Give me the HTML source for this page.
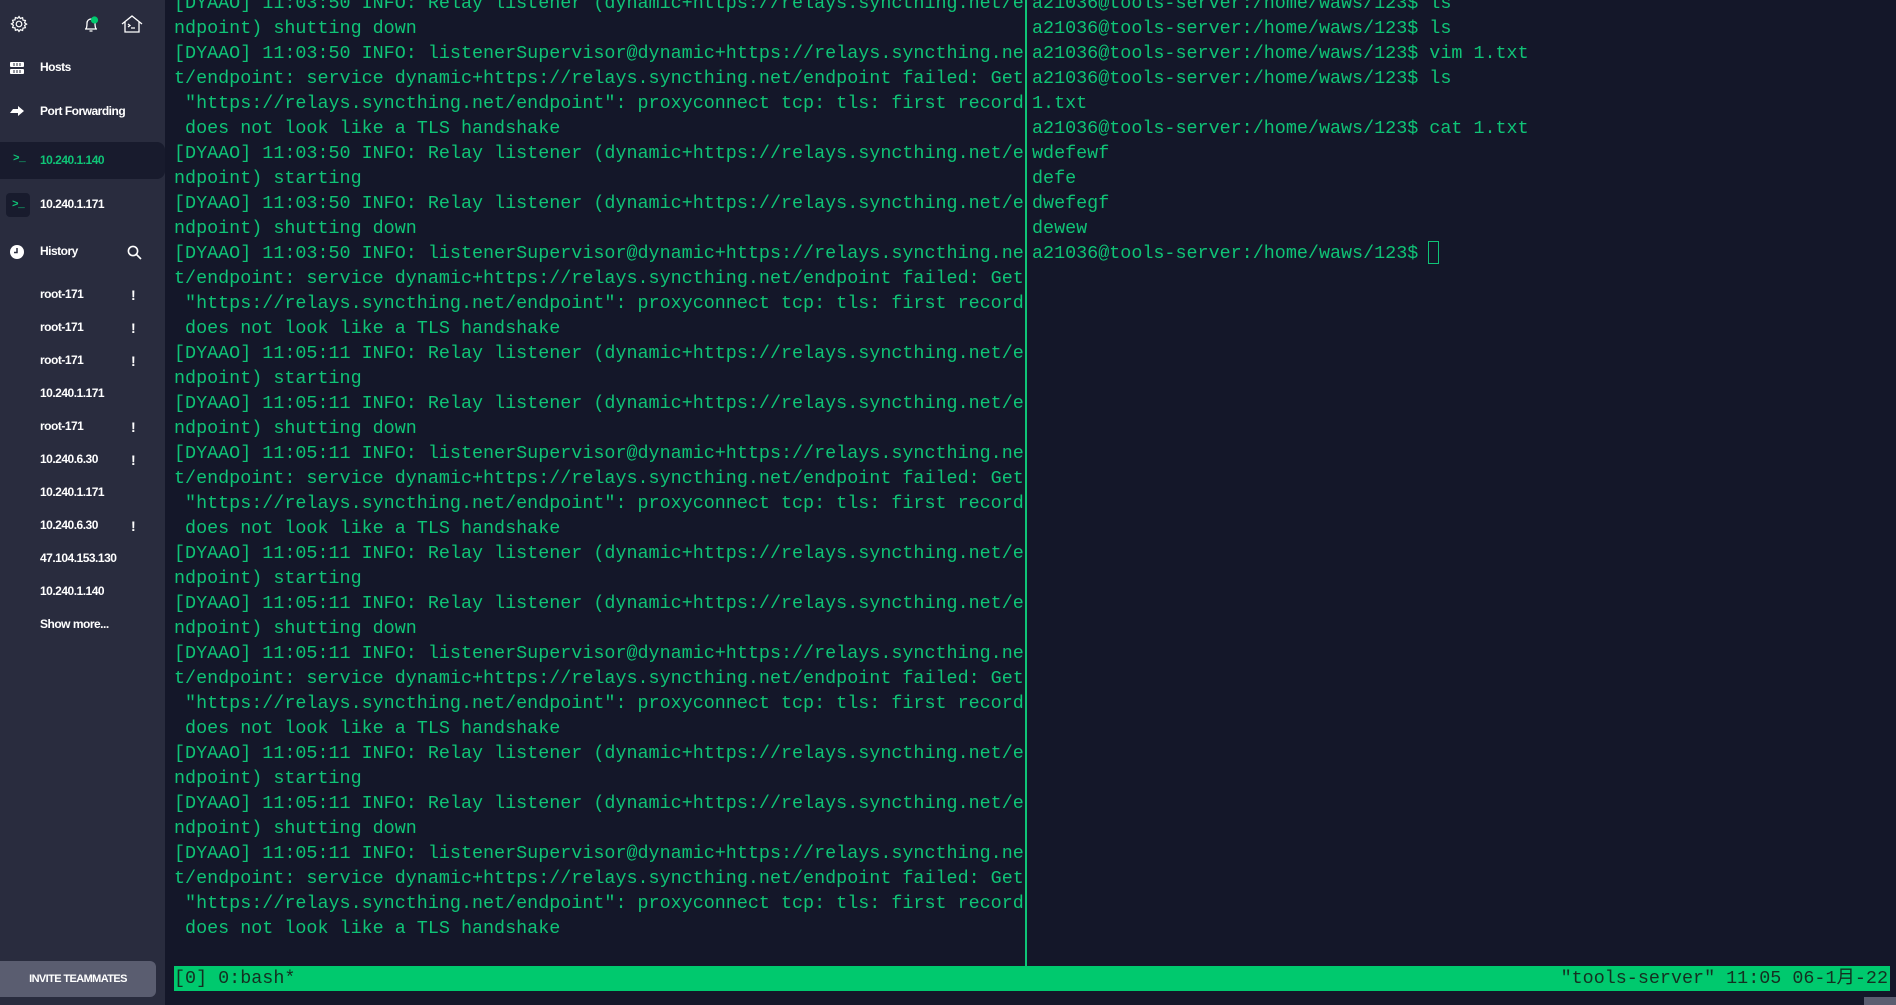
<!DOCTYPE html>
<html><head><meta charset="utf-8"><style>
*{margin:0;padding:0;box-sizing:border-box}
html,body{width:1896px;height:1005px;overflow:hidden;background:#141729}
#side{position:absolute;left:0;top:0;width:165px;height:1005px;background:#292c3e;font-family:"Liberation Sans",sans-serif;color:#fff;font-weight:bold;letter-spacing:-0.5px}
.it{position:absolute;left:40px;font-size:12px}
.ex{position:absolute;left:131px;font-size:14px;font-weight:bold}
.ic{position:absolute}
#act{position:absolute;left:0;top:142px;width:165px;height:37px;background:#181b2d;border-radius:0 8px 8px 0}
#inv{position:absolute;left:0;top:961px;width:156px;height:36px;background:#5a5d70;border-radius:0 6px 6px 0;font-size:11px;text-align:center;line-height:36px;letter-spacing:-0.6px}
pre{position:absolute;top:-9px;font-family:"Liberation Mono","Noto Sans CJK SC",monospace;font-size:18.4px;line-height:25px;color:#0fc477}
#div{position:absolute;left:1025px;top:0;width:2px;height:966px;background:#0fc477}
#bar{position:absolute;left:174px;top:966px;width:1716px;height:25px;background:#00c96e;font-family:"Liberation Mono","Noto Sans CJK SC",monospace;font-size:18.4px;line-height:25px;color:#143021;white-space:pre}
#cur{position:absolute;left:1428px;top:241px;width:11px;height:23px;border:1px solid #0fc477}
</style></head><body>
<div id="side">
<svg class="ic" style="left:10px;top:15px" width="18" height="18" viewBox="0 0 18 18" fill="none" stroke="#fff" stroke-width="1.2"><circle cx="9" cy="9" r="2.8"/><path d="M9 1.5l1.3 2 2.3-.8.4 2.4 2.4.4-.8 2.3 2 1.3-2 1.3.8 2.3-2.4.4-.4 2.4-2.3-.8L9 16.5l-1.3-2-2.3.8-.4-2.4-2.4-.4.8-2.3-2-1.3 2-1.3-.8-2.3 2.4-.4.4-2.4 2.3.8z"/></svg>
<svg class="ic" style="left:81px;top:14px" width="20" height="20" viewBox="0 0 20 20" fill="none" stroke="#fff" stroke-width="1.3"><path d="M4 15h12M5 15c1-2 1-4 1-6a4 4 0 018 0c0 2 0 4 1 6M8.5 17h3"/><circle cx="13.5" cy="6" r="3.6" fill="#00c96e" stroke="none"/></svg>
<svg class="ic" style="left:121px;top:14px" width="22" height="20" viewBox="0 0 22 20" fill="none" stroke="#fff" stroke-width="1.3"><path d="M1 10L11 2l10 8M4 8v10h14V8M7 10l2 1.5L7 13M10 14h4"/></svg>
<svg class="ic" style="left:10px;top:62px" width="14" height="12" viewBox="0 0 14 12"><rect x="0" y="0" width="14" height="5" rx="1" fill="#fff"/><rect x="0" y="7" width="14" height="5" rx="1" fill="#fff"/><path d="M4 1v3M7 1v3M10 1v3M4 8v3M7 8v3M10 8v3" stroke="#292c3e" stroke-width="1"/></svg>
<div class="it" style="top:60px">Hosts</div>
<svg class="ic" style="left:10px;top:105px" width="14" height="12" viewBox="0 0 14 12"><path d="M0 8l3-4h5V1l6 5-6 5V8z" fill="#fff"/></svg>
<div class="it" style="top:104px">Port Forwarding</div>
<div id="act"></div>
<div class="ic" style="left:13px;top:153px;color:#0fc477;font-size:11px;font-family:'Liberation Mono',monospace">&gt;_</div>
<div class="it" style="top:153px;color:#0fc477">10.240.1.140</div>
<div class="ic" style="left:6px;top:193px;width:24px;height:24px;background:#181b2d;border-radius:4px;color:#0fc477;font-size:11px;font-family:'Liberation Mono',monospace;padding:6px 0 0 6px">&gt;_</div>
<div class="it" style="top:197px">10.240.1.171</div>
<svg class="ic" style="left:10px;top:245px" width="14" height="14" viewBox="0 0 14 14"><circle cx="7" cy="7" r="7" fill="#fff"/><path d="M7 3v4.5H4" stroke="#292c3e" stroke-width="1.5" fill="none"/></svg>
<div class="it" style="top:244px">History</div>
<svg class="ic" style="left:127px;top:245px" width="15" height="15" viewBox="0 0 15 15" fill="none" stroke="#fff" stroke-width="1.6"><circle cx="6" cy="6" r="4.6"/><path d="M9.5 9.5L14 14"/></svg>
<div class="it" style="top:287px">root-171</div><div class="ex" style="top:287px">!</div>
<div class="it" style="top:320px">root-171</div><div class="ex" style="top:320px">!</div>
<div class="it" style="top:353px">root-171</div><div class="ex" style="top:353px">!</div>
<div class="it" style="top:386px">10.240.1.171</div>
<div class="it" style="top:419px">root-171</div><div class="ex" style="top:419px">!</div>
<div class="it" style="top:452px">10.240.6.30</div><div class="ex" style="top:452px">!</div>
<div class="it" style="top:485px">10.240.1.171</div>
<div class="it" style="top:518px">10.240.6.30</div><div class="ex" style="top:518px">!</div>
<div class="it" style="top:551px">47.104.153.130</div>
<div class="it" style="top:584px">10.240.1.140</div>
<div class="it" style="top:617px">Show more...</div>
<div id="inv">INVITE TEAMMATES</div>
</div>
<pre style="left:174px">[DYAAO] 11:03:50 INFO: Relay listener (dynamic+https://relays.syncthing.net/e
ndpoint) shutting down
[DYAAO] 11:03:50 INFO: listenerSupervisor@dynamic+https://relays.syncthing.ne
t/endpoint: service dynamic+https://relays.syncthing.net/endpoint failed: Get
 "https://relays.syncthing.net/endpoint": proxyconnect tcp: tls: first record
 does not look like a TLS handshake
[DYAAO] 11:03:50 INFO: Relay listener (dynamic+https://relays.syncthing.net/e
ndpoint) starting
[DYAAO] 11:03:50 INFO: Relay listener (dynamic+https://relays.syncthing.net/e
ndpoint) shutting down
[DYAAO] 11:03:50 INFO: listenerSupervisor@dynamic+https://relays.syncthing.ne
t/endpoint: service dynamic+https://relays.syncthing.net/endpoint failed: Get
 "https://relays.syncthing.net/endpoint": proxyconnect tcp: tls: first record
 does not look like a TLS handshake
[DYAAO] 11:05:11 INFO: Relay listener (dynamic+https://relays.syncthing.net/e
ndpoint) starting
[DYAAO] 11:05:11 INFO: Relay listener (dynamic+https://relays.syncthing.net/e
ndpoint) shutting down
[DYAAO] 11:05:11 INFO: listenerSupervisor@dynamic+https://relays.syncthing.ne
t/endpoint: service dynamic+https://relays.syncthing.net/endpoint failed: Get
 "https://relays.syncthing.net/endpoint": proxyconnect tcp: tls: first record
 does not look like a TLS handshake
[DYAAO] 11:05:11 INFO: Relay listener (dynamic+https://relays.syncthing.net/e
ndpoint) starting
[DYAAO] 11:05:11 INFO: Relay listener (dynamic+https://relays.syncthing.net/e
ndpoint) shutting down
[DYAAO] 11:05:11 INFO: listenerSupervisor@dynamic+https://relays.syncthing.ne
t/endpoint: service dynamic+https://relays.syncthing.net/endpoint failed: Get
 "https://relays.syncthing.net/endpoint": proxyconnect tcp: tls: first record
 does not look like a TLS handshake
[DYAAO] 11:05:11 INFO: Relay listener (dynamic+https://relays.syncthing.net/e
ndpoint) starting
[DYAAO] 11:05:11 INFO: Relay listener (dynamic+https://relays.syncthing.net/e
ndpoint) shutting down
[DYAAO] 11:05:11 INFO: listenerSupervisor@dynamic+https://relays.syncthing.ne
t/endpoint: service dynamic+https://relays.syncthing.net/endpoint failed: Get
 "https://relays.syncthing.net/endpoint": proxyconnect tcp: tls: first record
 does not look like a TLS handshake</pre>
<div id="div"></div>
<pre style="left:1032px">a21036@tools-server:/home/waws/123$ ls
a21036@tools-server:/home/waws/123$ ls
a21036@tools-server:/home/waws/123$ vim 1.txt
a21036@tools-server:/home/waws/123$ ls
1.txt
a21036@tools-server:/home/waws/123$ cat 1.txt
wdefewf
defe
dwefegf
dewew
a21036@tools-server:/home/waws/123$ </pre>
<div id="cur"></div>
<div id="bar">[0] 0:bash*<span style="position:absolute;right:2px;top:0">"tools-server" 11:05 06-1月-22</span></div>
<div style="position:absolute;left:1864px;top:997px;width:32px;height:8px;background:#5a5d70"></div>
</body></html>
